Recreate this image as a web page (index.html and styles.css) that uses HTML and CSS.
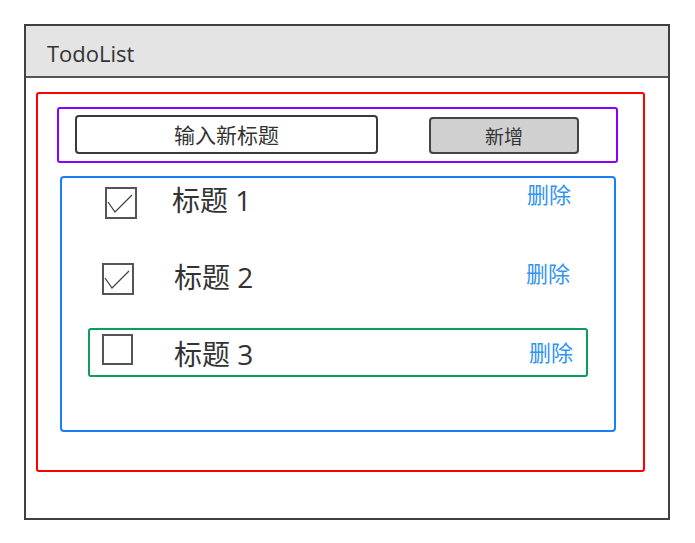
FILE: index.html
```html
<!DOCTYPE html>
<html lang="zh">
<head>
<meta charset="utf-8">
<title>TodoList</title>
<link rel="stylesheet" href="styles.css">
</head>
<body>
<div class="frame">
  <div class="header"><span class="title">TodoList</span></div>
  <div class="app">
    <div class="add-bar">
      <div class="input">输入新标题</div>
      <div class="btn">新增</div>
    </div>
    <div class="list">
      <div class="row row1">
        <span class="box"><svg viewBox="0 0 32 32" width="32" height="32"><polyline points="3,15 10,25 27,8" fill="none" stroke="#444" stroke-width="1.3"/></svg></span>
        <span class="label">标题 1</span>
        <span class="del">删除</span>
      </div>
      <div class="row row2">
        <span class="box"><svg viewBox="0 0 32 32" width="32" height="32"><polyline points="3,15 10,25 27,8" fill="none" stroke="#444" stroke-width="1.3"/></svg></span>
        <span class="label">标题 2</span>
        <span class="del">删除</span>
      </div>
      <div class="row row3">
        <span class="box"></span>
        <span class="label">标题 3</span>
        <span class="del">删除</span>
      </div>
    </div>
  </div>
</div>
</body>
</html>
```
FILE: styles.css
```css
* { box-sizing: border-box; }
body {
  margin: 0;
  background: #fff;
  font-family: "Open Sans", "Noto Sans CJK SC", sans-serif;
  color: #333;
}
.frame {
  margin: 24px 0 0 24px;
  width: 646px;
  height: 496px;
  border: 2px solid #404040;
  display: flex;
  flex-direction: column;
}
.header {
  height: 52px;
  background: #e4e4e4;
  border-bottom: 2px solid #555;
  display: flex;
  align-items: center;
  padding: 3px 0 0 21px;
}
.title {
  font-size: 22px;
  color: #333;
  line-height: 1;
}
.app {
  margin: 14px 0 0 10px;
  width: 609px;
  height: 380px;
  border: 2px solid #ff0000;
  border-radius: 3px;
}
.add-bar {
  margin: 13px 0 0 19px;
  width: 561px;
  height: 56px;
  border: 2px solid #8a00ff;
  border-radius: 3px;
  display: flex;
  align-items: flex-start;
  padding: 6px 0 0 16px;
  font-family: "Noto Sans CJK SC", sans-serif;
}
.input {
  width: 303px;
  height: 39px;
  border: 2px solid #3a3a3a;
  border-radius: 4px;
  display: flex;
  align-items: center;
  justify-content: center;
  font-size: 21px;
  color: #333;
  line-height: 1;
}
.btn {
  margin: 2px 0 0 51px;
  width: 150px;
  height: 37px;
  background: #d0d0d0;
  border: 2px solid #444;
  border-radius: 4px;
  display: flex;
  align-items: center;
  justify-content: center;
  font-size: 19px;
  color: #333;
  line-height: 1;
}
.list {
  margin: 13px 0 0 22px;
  width: 556px;
  height: 256px;
  border: 2px solid #1a7ff5;
  border-radius: 4px;
  padding-top: 9px;
  font-family: "Open Sans", "Noto Sans CJK SC", sans-serif;
}
.row {
  display: flex;
  align-items: center;
}
.box {
  width: 32px;
  height: 32px;
  border: 2px solid #555;
  flex: none;
  position: relative;
}
.box svg {
  position: absolute;
  left: -2px;
  top: -2px;
}
.label {
  font-size: 28px;
  line-height: 1;
  color: #333;
}
.del {
  margin-left: auto;
  font-family: "Noto Sans CJK SC", sans-serif;
  font-size: 22px;
  line-height: 1;
  color: #3194f2;
}
.row1 {
  height: 32px;
  padding: 0 43px 0 43px;
}
.row1 .label { margin-left: 35px; margin-bottom: 6px; }
.row1 .del { margin-bottom: 20px; }
.row2 {
  margin-top: 44px;
  height: 32px;
  padding: 0 44px 0 40px;
}
.row2 .label { margin-left: 40px; margin-bottom: 4px; }
.row2 .del { margin-bottom: 14px; }
.row3 {
  margin: 33px 26px 0 26px;
  height: 49px;
  border: 2px solid #0e9d58;
  border-radius: 3px;
  padding: 0 13px 0 12px;
}
.row3 .box {
  width: 31px;
  height: 31px;
  margin-bottom: 6px;
}
.row3 .label { margin-left: 41px; margin-bottom: -2px; }
.row3 .del { margin-bottom: 4px; }
```
